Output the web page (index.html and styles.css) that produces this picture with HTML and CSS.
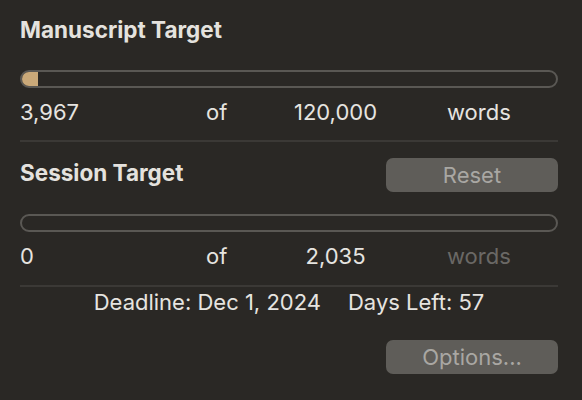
FILE: index.html
```html
<!DOCTYPE html>
<html>
<head>
<meta charset="utf-8">
<link rel="stylesheet" href="styles.css">
</head>
<body>
<div class="panel">
  <div class="title manuscript-title">Manuscript Target</div>
  <div class="bar bar-one"><div class="fill" style="width: 18px"></div></div>
  <div class="counts">
    <span class="c1">3,967</span>
    <span class="c2">of</span>
    <span class="c3">120,000</span>
    <span class="c4">words</span>
  </div>
  <div class="sep"></div>
  <div class="session-head">
    <div class="title session-title">Session Target</div>
    <div class="btn">Reset</div>
  </div>
  <div class="bar bar-two"></div>
  <div class="counts counts-two">
    <span class="c1">0</span>
    <span class="c2">of</span>
    <span class="c3">2,035</span>
    <span class="c4 dim">words</span>
  </div>
  <div class="sep sep-two"></div>
  <div class="deadline">
    <span>Deadline: Dec 1, 2024</span>
    <span>Days Left: 57</span>
  </div>
  <div class="footer">
    <div class="btn">Options...</div>
  </div>
</div>
</body>
</html>
```
FILE: styles.css
```css
html, body {
  margin: 0;
  padding: 0;
  background: #2a2825;
}
body {
  width: 582px;
  height: 400px;
  overflow: hidden;
  font-family: Inter, "Noto Sans", sans-serif;
  color: #e6e4e0;
}
.panel {
  padding: 0 24px 0 20px;
  display: flex;
  flex-direction: column;
}
.title {
  font-size: 22.5px;
  font-weight: 700;
  color: #e4e2de;
  line-height: 26px;
}
.manuscript-title {
  margin-top: 17px;
}
.bar {
  height: 18px;
  box-sizing: border-box;
  border: 2px solid #5a5854;
  border-radius: 9px;
  position: relative;
  overflow: hidden;
}
.bar-one {
  margin-top: 27px;
}
.fill {
  position: absolute;
  left: -2px;
  top: -2px;
  bottom: -2px;
  background: #caa979;
  border-radius: 9px 0 0 9px;
}
.counts {
  display: grid;
  grid-template-columns: 186px 60px 139px 1fr;
  font-size: 22px;
  line-height: 26px;
  margin-top: 11px;
}
.c3 { text-align: center; }
.c4 { padding-left: 42px; }
.dim { color: #6a6865; }
.sep {
  height: 2px;
  background: #3b3936;
  margin-top: 15px;
}
.session-head {
  display: flex;
  justify-content: space-between;
  align-items: flex-start;
  margin-top: 16px;
}
.session-title {
  padding-top: 2px;
}
.btn {
  width: 172px;
  height: 34px;
  border-radius: 7px;
  background: #5f5d59;
  color: #a9a7a3;
  font-size: 22px;
  display: flex;
  align-items: center;
  justify-content: center;
}
.bar-two {
  margin-top: 22px;
}
.counts-two {
  margin-top: 11px;
}
.sep-two {
  margin-top: 16px;
}
.deadline {
  display: flex;
  justify-content: center;
  gap: 27px;
  font-size: 22px;
  line-height: 26px;
  margin-top: 2px;
}
.footer {
  display: flex;
  justify-content: flex-end;
  margin-top: 25px;
}
```
